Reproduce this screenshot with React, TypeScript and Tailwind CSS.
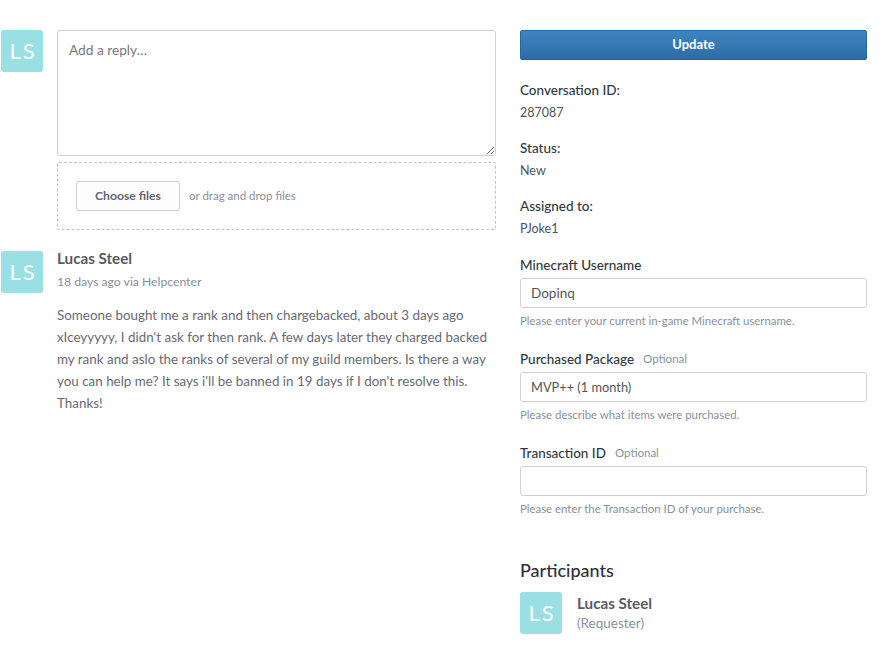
import React from 'react';

const Avatar = () => (
  <div className="flex h-[42px] w-[42px] shrink-0 items-center justify-center rounded-[3px] bg-[#9adfe4] pb-px pl-[2px] text-[22px] font-normal tracking-[2px] text-white">
    LS
  </div>
);

const Field = ({ label, optional, value, hint, valueSize }: { label: string; optional?: boolean; value: string; hint: string; valueSize?: string }) => (
  <div className="mb-[18px]">
    <div className="flex h-[20px] items-center text-[13.5px] font-medium leading-[20px] text-[#2f3941]">
      {label}
      {optional && <span className="ml-[9px] text-[11.5px] font-normal text-[#87929d]">Optional</span>}
    </div>
    <input
      readOnly
      value={value}
      className={`mt-[3px] block h-[30px] w-full rounded-[3px] border border-[#d1d1d1] px-[10px] text-[#555555] outline-none ${valueSize ?? 'text-[13.5px]'}`}
    />
    <div className="mt-[3px] h-[20px] text-[11.4px] leading-[20px] text-[#87929d]">{hint}</div>
  </div>
);

const Info = ({ label, value }: { label: string; value: string }) => (
  <div className="mb-[12px] text-[13.5px] leading-[22px]">
    <div className="font-medium text-[#2f3941]">{label}</div>
    <div className="text-[12.5px] leading-[24px] text-[#49545c]">{value}</div>
  </div>
);

export default function App() {
  return (
    <div className="flex h-[666px] w-[889px] overflow-hidden bg-white pl-px pr-[22px] pt-[30px] font-['Lato','Noto_Sans',sans-serif]">
      <div className="w-[495px] shrink-0">
        <div className="flex gap-[14px]">
          <Avatar />
          <div className="flex-1">
            <textarea
              placeholder="Add a reply…"
              className="block h-[126px] w-full rounded-[3px] border border-[#d1d1d1] px-[11px] py-[9px] text-[13.7px] text-[#555555] outline-none placeholder:text-[#7b7780]"
            />
            <div className="mt-[6px] flex h-[68px] items-center rounded-[2px] border border-dashed border-[#c4c4c4] pl-[18px]">
              <button className="h-[30px] w-[104px] rounded-[3px] border border-[#cfcfcf] bg-[#fdfdfd] text-[12.2px] font-bold text-[#5f6670]">
                Choose files
              </button>
              <span className="ml-[9px] text-[11.5px] text-[#87929d]">or drag and drop files</span>
            </div>
          </div>
        </div>
        <div className="mt-[21px] flex gap-[14px]">
          <Avatar />
          <div className="flex-1">
            <div className="-mt-px text-[15.2px] font-bold leading-[16px] text-[#5a5a62]">Lucas Steel</div>
            <div className="mt-[8px] text-[12.2px] leading-[16px] text-[#87929d]">18 days ago via Helpcenter</div>
            <p className="mt-[14px] text-[13.4px] leading-[22px] text-[#6a6a72]">
              Someone bought me a rank and then chargebacked, about 3 days ago
              <br />
              xIceyyyyy, I didn't ask for then rank. A few days later they charged backed
              <br />
              my rank and aslo the ranks of several of my guild members. Is there a way
              <br />
              you can help me? It says i'll be banned in 19 days if I don't resolve this.
              <br />
              Thanks!
            </p>
          </div>
        </div>
      </div>
      <div className="ml-[24px] flex-1">
        <button className="h-[30px] w-full rounded-[2px] border border-[#2b669a] bg-gradient-to-b from-[#3f84c0] to-[#2c6ca6] text-[13px] font-bold text-white">
          Update
        </button>
        <div className="mt-[19px] mb-[14px]">
          <Info label="Conversation ID:" value="287087" />
          <Info label="Status:" value="New" />
          <Info label="Assigned to:" value="PJoke1" />
        </div>
        <Field label="Minecraft Username" value="Dopinq" hint="Please enter your current in-game Minecraft username." />
        <Field label="Purchased Package" optional value="MVP++ (1 month)" valueSize="text-[12.8px]" hint="Please describe what items were purchased." />
        <Field label="Transaction ID" optional value="" hint="Please enter the Transaction ID of your purchase." />
        <div className="mt-[39px] text-[18px] font-medium leading-[24px] text-[#2f2f35]">Participants</div>
        <div className="mt-[10px] flex gap-[15px]">
          <Avatar />
          <div className="pt-px">
            <div className="text-[15.2px] font-bold leading-[20px] text-[#5a5a62]">Lucas Steel</div>
            <div className="text-[13.5px] leading-[20px] text-[#87929d]">(Requester)</div>
          </div>
        </div>
      </div>
    </div>
  );
}
